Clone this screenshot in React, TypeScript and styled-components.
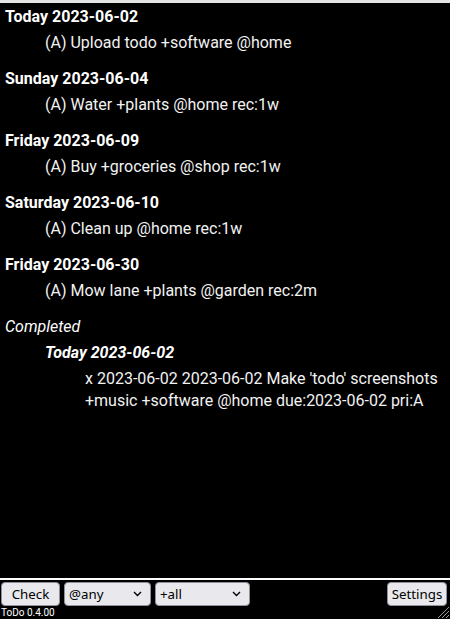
import React from "react";
import styled, { createGlobalStyle } from "styled-components";

const Global = createGlobalStyle`
  html, body { margin: 0; padding: 0; background: #000; }
  body { font-family: Roboto, "Noto Sans", sans-serif; }
  #root { height: 100vh; }
`;

const Frame = styled.div`
  height: 100vh;
  display: flex;
  flex-direction: column;
  background: #000;
  color: #fff;
  position: relative;
  overflow: hidden;
`;

const List = styled.div`
  flex: 1;
  border-top: 3px solid #e4e4e4;
  border-bottom: 2px solid #fff;
  padding: 1px 0 0 5px;
  overflow: hidden;
`;

const Group = styled.div<{ $nested?: boolean }>`
  margin-bottom: 10px;
  padding-left: ${(p) => (p.$nested ? "40px" : "0")};
`;

const Heading = styled.div<{ $italic?: boolean }>`
  font-size: 16px;
  font-weight: 700;
  font-style: ${(p) => (p.$italic ? "italic" : "normal")};
  line-height: 22px;
  padding: 2px 0;
`;

const Section = styled.div`
  font-size: 16px;
  font-style: italic;
  line-height: 22px;
  padding: 2px 0;
`;

const Item = styled.div`
  font-size: 16px;
  line-height: 22px;
  padding: 2px 8px 2px 40px;
  color: #f2f2f2;
`;

const Toolbar = styled.div`
  display: flex;
  align-items: center;
  gap: 4px;
  padding: 2px 3px 0 1px;
`;

const Spacer = styled.div`
  flex: 1;
`;

const Btn = styled.button<{ $w: number }>`
  width: ${(p) => p.$w}px;
  height: 24px;
  box-sizing: border-box;
  background: #e9e9ed;
  border: 1px solid #8f8f9d;
  border-radius: 4px;
  color: #000;
  font-family: "Noto Sans", "Open Sans", sans-serif;
  font-size: 13.3px;
  padding: 0;
  display: flex;
  align-items: center;
  justify-content: center;
`;

const SelectWrap = styled.div<{ $w: number }>`
  position: relative;
  width: ${(p) => p.$w}px;
  height: 24px;
`;

const Select = styled.select`
  appearance: none;
  -webkit-appearance: none;
  width: 100%;
  height: 24px;
  box-sizing: border-box;
  background: #e9e9ed;
  border: 1px solid #8f8f9d;
  border-radius: 4px;
  color: #000;
  font-family: "Noto Sans", "Open Sans", sans-serif;
  font-size: 13.3px;
  padding: 0 0 0 4px;
  outline: none;
`;

const Chevron = styled.svg`
  position: absolute;
  right: 9px;
  top: 9px;
  pointer-events: none;
`;

const Version = styled.div`
  font-family: Roboto, sans-serif;
  font-size: 10px;
  line-height: 12px;
  padding: 1px 0 0 1px;
  height: 12px;
  color: #fff;
`;

const Grip = styled.svg`
  position: absolute;
  right: 0;
  bottom: 0;
`;

const groups = [
  { h: "Today 2023-06-02", t: "(A) Upload todo +software @home" },
  { h: "Sunday 2023-06-04", t: "(A) Water +plants @home rec:1w" },
  { h: "Friday 2023-06-09", t: "(A) Buy +groceries @shop rec:1w" },
  { h: "Saturday 2023-06-10", t: "(A) Clean up @home rec:1w" },
  { h: "Friday 2023-06-30", t: "(A) Mow lane +plants @garden rec:2m" },
];

const ChevronIcon = () => (
  <Chevron width="9" height="6" viewBox="0 0 9 6">
    <path d="M1 1 L4.5 4.5 L8 1" fill="none" stroke="#000" strokeWidth="1.4" />
  </Chevron>
);

export default function App() {
  return (
    <>
      <Global />
      <Frame>
        <List>
          {groups.map((g) => (
            <Group key={g.h}>
              <Heading>{g.h}</Heading>
              <Item>{g.t}</Item>
            </Group>
          ))}
          <Section>Completed</Section>
          <Group $nested>
            <Heading $italic>Today 2023-06-02</Heading>
            <Item>
              x 2023-06-02 2023-06-02 Make 'todo' screenshots +music +software @home due:2023-06-02 pri:A
            </Item>
          </Group>
        </List>
        <Toolbar>
          <Btn $w={59}>Check</Btn>
          <SelectWrap $w={87}>
            <Select defaultValue="@any">
              <option>@any</option>
            </Select>
            <ChevronIcon />
          </SelectWrap>
          <SelectWrap $w={95}>
            <Select defaultValue="+all">
              <option>+all</option>
            </Select>
            <ChevronIcon />
          </SelectWrap>
          <Spacer />
          <Btn $w={60}>Settings</Btn>
        </Toolbar>
        <Version>ToDo 0.4.00</Version>
        <Grip width="13" height="13" viewBox="0 0 13 13">
          <path d="M12 1 L1 12 M12 5 L5 12 M12 9 L9 12" stroke="#9a9a9a" strokeWidth="1" />
        </Grip>
      </Frame>
    </>
  );
}
